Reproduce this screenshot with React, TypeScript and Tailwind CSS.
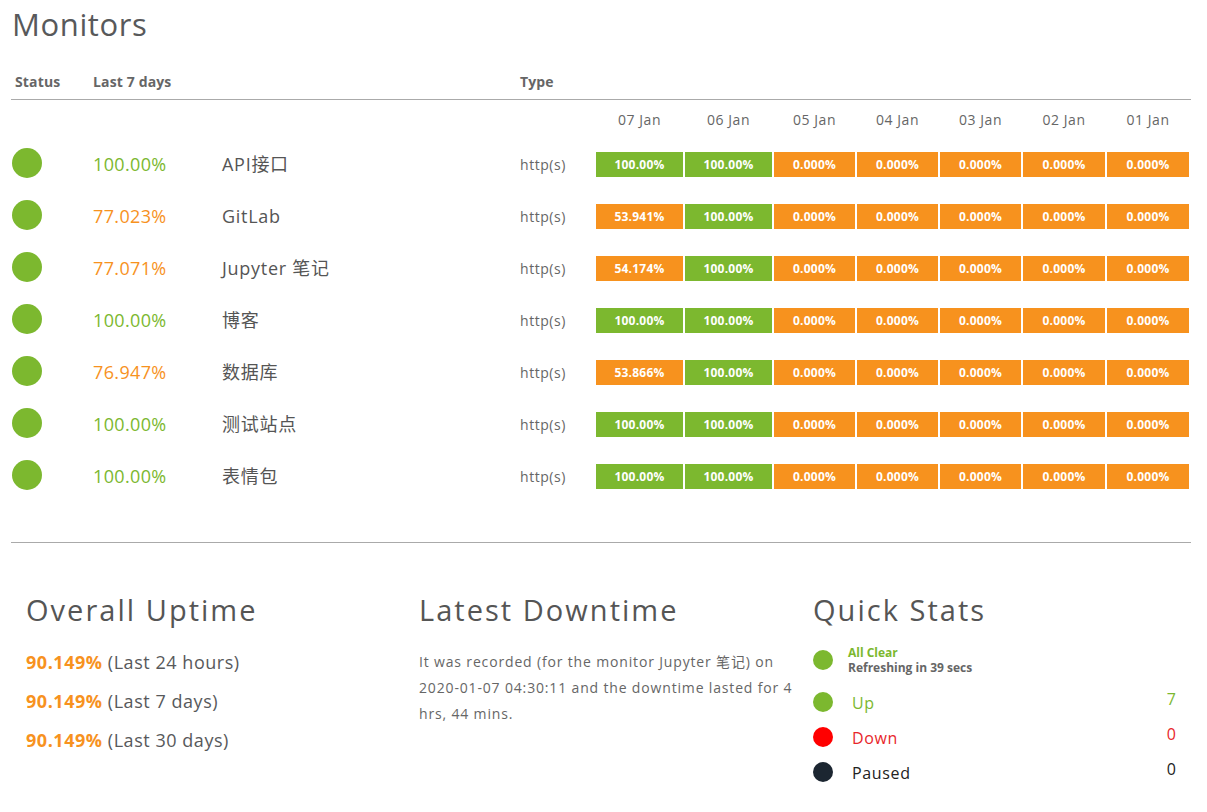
import React from "react";

const GREEN = "bg-[#7cb82f]";
const ORANGE = "bg-[#f7921e]";

type Row = { pct: string; good: boolean; name: string; bars: string[] };

const rows: Row[] = [
  { pct: "100.00%", good: true, name: "API接口", bars: ["100.00%", "100.00%"] },
  { pct: "77.023%", good: false, name: "GitLab", bars: ["53.941%", "100.00%"] },
  { pct: "77.071%", good: false, name: "Jupyter 笔记", bars: ["54.174%", "100.00%"] },
  { pct: "100.00%", good: true, name: "博客", bars: ["100.00%", "100.00%"] },
  { pct: "76.947%", good: false, name: "数据库", bars: ["53.866%", "100.00%"] },
  { pct: "100.00%", good: true, name: "测试站点", bars: ["100.00%", "100.00%"] },
  { pct: "100.00%", good: true, name: "表情包", bars: ["100.00%", "100.00%"] },
];

const dates = ["07 Jan", "06 Jan", "05 Jan", "04 Jan", "03 Jan", "02 Jan", "01 Jan"];
const colW = ["w-[87px]", "w-[87px]", "w-[81px]", "w-[81px]", "w-[81px]", "w-[82px]", "w-[82px]"];

export default function App() {
  return (
    <div
      className="w-[1207px] h-[812px] bg-white text-[#58595b] overflow-hidden"
      style={{ fontFamily: '"Open Sans", "Noto Sans CJK SC", sans-serif' }}
    >
      <div className="ml-[11px] w-[1180px]">
        <div className="h-[48px] leading-[48px] text-[31px] tracking-[0.02em] pl-[1px]">Monitors</div>
        <div className="h-[52px] flex items-end pb-[9px] border-b border-[#aaaaaa] text-[14px] leading-[17px] font-bold text-[#666] tracking-[0.01em]">
          <div className="w-[82px] pl-[4px]">Status</div>
          <div className="w-[427px]">Last 7 days</div>
          <div>Type</div>
        </div>
        <div className="h-[37px] flex items-center pt-[2px]">
          <div className="w-[585px]" />
          <div className="flex gap-[2px]">
            {dates.map((d, i) => (
              <div key={d} className={`${colW[i]} text-center text-[14px] tracking-[0.04em] text-[#666]`}>
                {d}
              </div>
            ))}
          </div>
        </div>
        {rows.map((r) => (
          <div key={r.name} className="h-[52px] flex items-center">
            <div className="w-[82px] pl-[1px]">
              <div className={`w-[30px] h-[30px] rounded-full ${GREEN}`} />
            </div>
            <div className={`w-[129px] pt-[3px] text-[18px] tracking-[0.02em] ${r.good ? "text-[#7cb82f]" : "text-[#f7921e]"}`}>{r.pct}</div>
            <div className="w-[298px] pt-[3px] text-[18px] tracking-[0.04em] text-[#555]">{r.name}</div>
            <div className="w-[76px] pt-[3px] text-[14px] tracking-[0.04em] text-[#666]">http(s)</div>
            <div className="flex gap-[2px] pt-[3px]">
              {dates.map((d, i) => {
                const v = i < 2 ? r.bars[i] : "0.000%";
                const g = v === "100.00%";
                return (
                  <div
                    key={d}
                    className={`${colW[i]} h-[25px] flex items-center justify-center text-white text-[12px] font-bold tracking-[0.02em] ${g ? GREEN : ORANGE}`}
                  >
                    {v}
                  </div>
                );
              })}
            </div>
          </div>
        ))}
        <div className="mt-[41px] border-t border-[#aaaaaa]" />
        <div className="flex pt-[47px]">
          <div className="w-[393px] pl-[15px]">
            <div className="text-[29px] leading-[40px] tracking-[0.07em] text-[#555]">Overall Uptime</div>
            <div className="mt-[22px] flex flex-col gap-[19px] text-[18px] leading-[20px] tracking-[0.03em]">
              <div><span className="font-bold text-[#f7921e]">90.149%</span> (Last 24 hours)</div>
              <div><span className="font-bold text-[#f7921e]">90.149%</span> (Last 7 days)</div>
              <div><span className="font-bold text-[#f7921e]">90.149%</span> (Last 30 days)</div>
            </div>
          </div>
          <div className="w-[394px] pl-[15px]">
            <div className="text-[29px] leading-[40px] tracking-[0.07em] text-[#555]">Latest Downtime</div>
            <div className="mt-[19px] text-[14px] leading-[26px] tracking-[0.06em] text-[#666] whitespace-nowrap">
              It was recorded (for the monitor Jupyter 笔记) on<br />
              2020-01-07 04:30:11 and the downtime lasted for 4<br />
              hrs, 44 mins.
            </div>
          </div>
          <div className="w-[393px] pl-[15px] pr-[15px]">
            <div className="text-[29px] leading-[40px] tracking-[0.07em] text-[#555]">Quick Stats</div>
            <div className="mt-[15px] flex items-center">
              <div className={`w-[20px] h-[20px] rounded-full ${GREEN}`} />
              <div className="ml-[15px] text-[12px] leading-[15px] font-bold flex flex-col">
                <span className="text-[#7cb82f]">All Clear</span>
                <span className="text-[#666]">Refreshing in 39 secs</span>
              </div>
            </div>
            {[
              { l: "Up", n: "7", c: GREEN, t: "text-[#7cb82f]" },
              { l: "Down", n: "0", c: "bg-[#ff0000]", t: "text-[#e8262a]" },
              { l: "Paused", n: "0", c: "bg-[#1c2631]", t: "text-[#222]" },
            ].map((s, i) => (
              <div key={s.l} className={`flex items-center h-[35px] ${i === 0 ? "mt-[9px]" : ""}`}>
                <div className={`w-[20px] h-[20px] rounded-full ${s.c}`} />
                <div className={`ml-[19px] text-[16px] tracking-[0.04em] pt-[2px] ${s.t}`}>{s.l}</div>
                <div className={`ml-auto text-[16px] -mt-[6px] ${s.t}`}>{s.n}</div>
              </div>
            ))}
          </div>
        </div>
      </div>
    </div>
  );
}
